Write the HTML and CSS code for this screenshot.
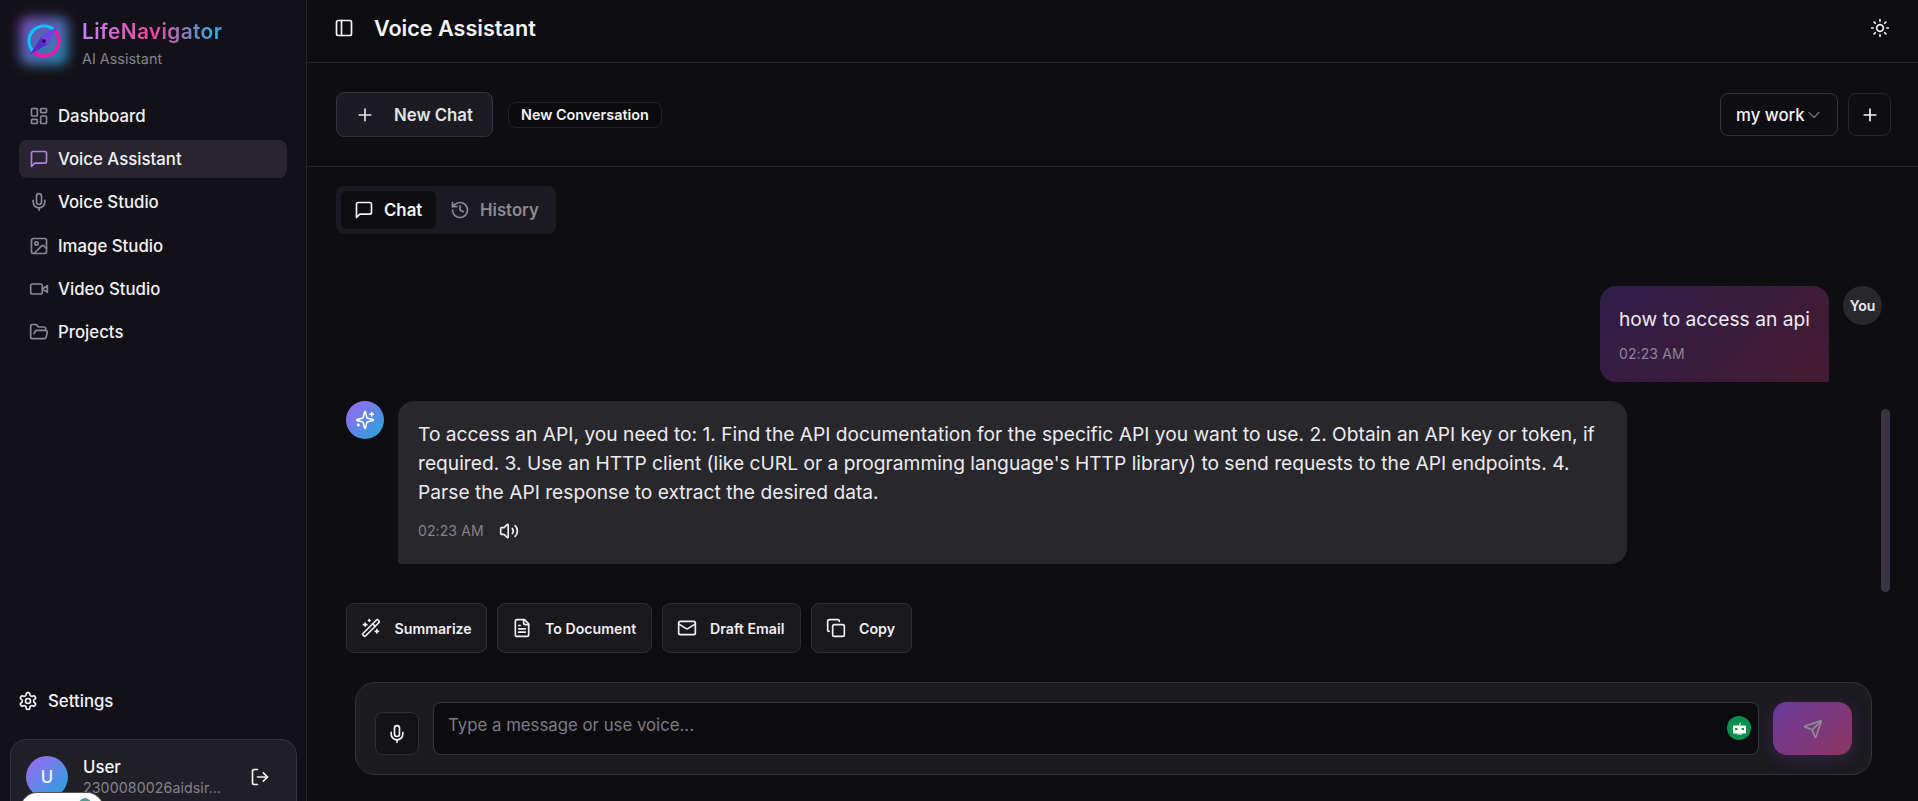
FILE: index.html
```html
<!DOCTYPE html>
<html lang="en">
<head>
<meta charset="utf-8">
<title>LifeNavigator - Voice Assistant</title>
<link rel="stylesheet" href="styles.css">
</head>
<body>
<div class="app">
  <aside class="sidebar">
    <div class="brand">
      <div class="logo">
        <svg class="logo-svg" width="36" height="36" viewBox="0 0 36 36" fill="none">
          <defs>
            <linearGradient id="ring" x1="0" y1="0" x2="1" y2="1"><stop offset=".5" stop-color="#00c8ff"/><stop offset=".5" stop-color="#ff10a8"/></linearGradient>
          </defs>
          <circle cx="18" cy="18" r="15" stroke="url(#ring)" stroke-width="3"/>
          <path d="M32 3 15 14.500 3.500 32 21 21.500Z" fill="#5a28d2"/>
          <path d="M32 3 15 14.500 21 21.500Z" fill="#7440ea"/>
          <circle cx="18" cy="18" r="1.800" fill="#120a30"/>
        </svg>
      </div>
      <div class="brand-text">
        <div class="brand-name">LifeNavigator</div>
        <div class="brand-sub">AI Assistant</div>
      </div>
    </div>
    <nav class="nav">
      <a class="nav-item"><svg class="ic" viewBox="0 0 24 24"><rect x="3" y="3" width="7" height="9" rx="1"/><rect x="14" y="3" width="7" height="5" rx="1"/><rect x="14" y="12" width="7" height="9" rx="1"/><rect x="3" y="16" width="7" height="5" rx="1"/></svg>Dashboard</a>
      <a class="nav-item active"><svg class="ic" viewBox="0 0 24 24"><path d="M21 15a2 2 0 0 1-2 2H7l-4 4V5a2 2 0 0 1 2-2h14a2 2 0 0 1 2 2z"/></svg>Voice Assistant</a>
      <a class="nav-item"><svg class="ic" viewBox="0 0 24 24"><path d="M12 2a3 3 0 0 0-3 3v7a3 3 0 0 0 6 0V5a3 3 0 0 0-3-3Z"/><path d="M19 10v2a7 7 0 0 1-14 0v-2"/><line x1="12" x2="12" y1="19" y2="22"/></svg>Voice Studio</a>
      <a class="nav-item"><svg class="ic" viewBox="0 0 24 24"><rect x="3" y="3" width="18" height="18" rx="2"/><circle cx="9" cy="9" r="2"/><path d="m21 15-3.100-3.100a2 2 0 0 0-2.800 0L6 21"/></svg>Image Studio</a>
      <a class="nav-item"><svg class="ic" viewBox="0 0 24 24"><path d="m22 8-6 4 6 4V8Z"/><rect x="2" y="6" width="14" height="12" rx="2"/></svg>Video Studio</a>
      <a class="nav-item"><svg class="ic" viewBox="0 0 24 24"><path d="m6 14 1.500-2.900A2 2 0 0 1 9.240 10H20a2 2 0 0 1 1.940 2.500l-1.540 6a2 2 0 0 1-1.950 1.500H4a2 2 0 0 1-2-2V5a2 2 0 0 1 2-2h3.900a2 2 0 0 1 1.690.9l.81 1.200a2 2 0 0 0 1.670.9H18a2 2 0 0 1 2 2v2"/></svg>Projects</a>
    </nav>
    <div class="settings"><svg class="ic" viewBox="0 0 24 24"><path d="M12.220 2h-.44a2 2 0 0 0-2 2v.18a2 2 0 0 1-1 1.730l-.43.25a2 2 0 0 1-2 0l-.15-.08a2 2 0 0 0-2.730.73l-.22.38a2 2 0 0 0 .73 2.730l.15.1a2 2 0 0 1 1 1.720v.51a2 2 0 0 1-1 1.740l-.15.09a2 2 0 0 0-.73 2.730l.22.38a2 2 0 0 0 2.730.73l.15-.08a2 2 0 0 1 2 0l.43.25a2 2 0 0 1 1 1.730V20a2 2 0 0 0 2 2h.44a2 2 0 0 0 2-2v-.18a2 2 0 0 1 1-1.730l.43-.25a2 2 0 0 1 2 0l.15.08a2 2 0 0 0 2.730-.73l.22-.39a2 2 0 0 0-.73-2.730l-.15-.08a2 2 0 0 1-1-1.740v-.5a2 2 0 0 1 1-1.740l.15-.09a2 2 0 0 0 .73-2.730l-.22-.38a2 2 0 0 0-2.730-.73l-.15.08a2 2 0 0 1-2 0l-.43-.25a2 2 0 0 1-1-1.730V4a2 2 0 0 0-2-2z"/><circle cx="12" cy="12" r="3"/></svg>Settings</div>
    <div class="user-card">
      <div class="user-avatar">U</div>
      <div class="user-info">
        <div class="user-name">User</div>
        <div class="user-mail">2300080026aidsir...</div>
      </div>
      <svg class="ic logout" viewBox="0 0 24 24"><path d="M9 21H5a2 2 0 0 1-2-2V5a2 2 0 0 1 2-2h4"/><polyline points="16 17 21 12 16 7"/><line x1="21" x2="9" y1="12" y2="12"/></svg>
    </div>
    <div class="float-pill"><span class="pill-dot"></span></div>
  </aside>
  <main class="main">
    <header class="topbar">
      <svg class="ic panel-ic" viewBox="0 0 24 24"><rect x="3" y="3" width="18" height="18" rx="2"/><path d="M9 3v18"/></svg>
      <h1 class="title">Voice Assistant</h1>
      <svg class="ic sun-ic" viewBox="0 0 24 24"><circle cx="12" cy="12" r="4"/><path d="M12 2v2M12 20v2M4.930 4.930l1.410 1.410M17.660 17.660l1.410 1.410M2 12h2M20 12h2M6.340 17.660l-1.410 1.410M19.070 4.930l-1.410 1.410"/></svg>
    </header>
    <section class="toolbar">
      <button class="new-chat"><svg class="ic" viewBox="0 0 24 24"><path d="M5 12h14M12 5v14"/></svg>New Chat</button>
      <span class="badge">New Conversation</span>
      <div class="toolbar-right">
        <button class="select">my work<svg class="ic chev" viewBox="0 0 24 24"><path d="m6 9 6 6 6-6"/></svg></button>
        <button class="add"><svg class="ic" viewBox="0 0 24 24"><path d="M5 12h14M12 5v14"/></svg></button>
      </div>
    </section>
    <section class="content">
      <div class="tabs">
        <button class="tab on"><svg class="ic" viewBox="0 0 24 24"><path d="M21 15a2 2 0 0 1-2 2H7l-4 4V5a2 2 0 0 1 2-2h14a2 2 0 0 1 2 2z"/></svg>Chat</button>
        <button class="tab"><svg class="ic" viewBox="0 0 24 24"><path d="M3 12a9 9 0 1 0 9-9 9.750 9.750 0 0 0-6.740 2.740L3 8"/><path d="M3 3v5h5"/><path d="M12 7v5l4 2"/></svg>History</button>
      </div>
      <div class="messages">
        <div class="row-user">
          <div class="bubble-user">
            <div class="msg">how to access an api</div>
            <div class="time user-time">02:23 AM</div>
          </div>
          <div class="you">You</div>
        </div>
        <div class="row-ai">
          <div class="ai-avatar"><svg class="ic spark" viewBox="0 0 24 24"><path d="M9.940 15.500A2 2 0 0 0 8.500 14.060l-6.140-1.580a.5.5 0 0 1 0-.96L8.500 9.940A2 2 0 0 0 9.940 8.500l1.580-6.140a.5.5 0 0 1 .96 0L14.060 8.500A2 2 0 0 0 15.500 9.940l6.140 1.580a.5.5 0 0 1 0 .96L15.500 14.060a2 2 0 0 0-1.440 1.440l-1.580 6.140a.5.5 0 0 1-.96 0z"/><path d="M20 3v4M22 5h-4M4 17v2M5 18H3"/></svg></div>
          <div class="bubble-ai">
            <div class="msg">To access an API, you need to: 1. Find the API documentation for the specific API you want to use. 2. Obtain an API key or token, if required. 3. Use an HTTP client (like cURL or a programming language's HTTP library) to send requests to the API endpoints. 4. Parse the API response to extract the desired data.</div>
            <div class="meta"><span class="time">02:23 AM</span><svg class="ic vol" viewBox="0 0 24 24"><path d="M11 4.700a.7.7 0 0 0-1.200-.5L6.400 7.600A1.400 1.400 0 0 1 5.400 8H3a1 1 0 0 0-1 1v6a1 1 0 0 0 1 1h2.400a1.400 1.400 0 0 1 1 .4l3.400 3.400a.7.7 0 0 0 1.200-.5z"/><path d="M16 9a5 5 0 0 1 0 6"/><path d="M19.400 18.400a9 9 0 0 0 0-12.800"/></svg></div>
          </div>
        </div>
        <div class="scroll-thumb"></div>
      </div>
      <div class="actions">
        <button class="action act-sum"><svg class="ic" viewBox="0 0 24 24"><path d="m21.640 3.640-1.280-1.280a1.210 1.210 0 0 0-1.720 0L2.360 18.640a1.210 1.210 0 0 0 0 1.720l1.280 1.280a1.200 1.200 0 0 0 1.720 0L21.640 5.360a1.200 1.200 0 0 0 0-1.720"/><path d="m14 7 3 3M5 6v4M19 14v4M10 2v2M7 8H3M21 16h-4M11 3H9"/></svg>Summarize</button>
        <button class="action act-doc"><svg class="ic" viewBox="0 0 24 24"><path d="M15 2H6a2 2 0 0 0-2 2v16a2 2 0 0 0 2 2h12a2 2 0 0 0 2-2V7Z"/><path d="M14 2v4a2 2 0 0 0 2 2h4M16 13H8M16 17H8M10 9H8"/></svg>To Document</button>
        <button class="action act-mail"><svg class="ic" viewBox="0 0 24 24"><rect x="2" y="4" width="20" height="16" rx="2"/><path d="m22 7-8.970 5.700a1.940 1.940 0 0 1-2.060 0L2 7"/></svg>Draft Email</button>
        <button class="action act-copy"><svg class="ic" viewBox="0 0 24 24"><rect x="8" y="8" width="14" height="14" rx="2"/><path d="M4 16c-1.100 0-2-.9-2-2V4c0-1.100.9-2 2-2h10c1.100 0 2 .9 2 2"/></svg>Copy</button>
      </div>
      <div class="composer">
        <button class="mic"><svg class="ic" viewBox="0 0 24 24"><path d="M12 2a3 3 0 0 0-3 3v7a3 3 0 0 0 6 0V5a3 3 0 0 0-3-3Z"/><path d="M19 10v2a7 7 0 0 1-14 0v-2"/><line x1="12" x2="12" y1="19" y2="22"/></svg></button>
        <div class="input">
          <span class="placeholder">Type a message or use voice...</span>
          <span class="bot">
            <svg width="15" height="13" viewBox="0 0 15 13"><path d="M7 4 8.500 .8" stroke="#fff" stroke-width="1" fill="none"/><rect x="1" y="3.500" width="13" height="8" rx="1" fill="#fff"/><rect x="3" y="6" width="2.400" height="2" fill="#0b8f4d"/><rect x="9.600" y="6" width="2.400" height="2" fill="#0b8f4d"/><rect x="5" y="11.500" width="5" height="1" fill="#fff"/></svg>
          </span>
        </div>
        <button class="send"><svg class="ic" viewBox="0 0 24 24"><path d="M14.536 21.686a.5.5 0 0 0 .937-.024l6.500-19a.496.496 0 0 0-.635-.635l-19 6.500a.5.5 0 0 0-.024.937l7.930 3.180a2 2 0 0 1 1.112 1.110z"/><path d="m21.854 2.147-10.940 10.939"/></svg></button>
      </div>
    </section>
  </main>
</div>
</body>
</html>
```
FILE: styles.css
```css
* { box-sizing: border-box; }
html, body { margin: 0; height: 100%; overflow: hidden; }
body { background: #0e0d12; color: #f5f5f6; font-family: Inter, "Liberation Sans", sans-serif; font-size: 16px; }
button { font-family: inherit; color: inherit; cursor: pointer; }
.ic { width: 20px; height: 20px; fill: none; stroke: currentColor; stroke-width: 2; stroke-linecap: round; stroke-linejoin: round; flex: none; }

.app { display: flex; height: 801px; overflow: hidden; }
.sidebar { width: 307px; flex: none; background: #131118; border-right: 1px solid #26252b; display: flex; flex-direction: column; position: relative; overflow: hidden; }
.brand { display: flex; gap: 20px; padding: 15px 0 0 26px; height: 80px; align-items: flex-start; }
.logo { width: 36px; height: 36px; margin-top: 8px; flex: none; position: relative; }
.logo::before { content: ""; position: absolute; inset: -6px; border-radius: 8px; background: linear-gradient(135deg, #8048bc, #1d8cac); filter: blur(6px); }
.logo-svg { display: block; position: relative; }
.brand-name { font-size: 20.8px; font-weight: 600; line-height: 24px; margin-top: 5px; letter-spacing: .4px; background: linear-gradient(90deg, #c084fc 0%, #ec4899 50%, #22b8e8 100%); -webkit-background-clip: text; background-clip: text; color: transparent; width: max-content; }
.brand-sub { font-size: 14.4px; line-height: 20px; color: #85838c; margin-top: 5px; }

.nav { display: flex; flex-direction: column; gap: 5.2px; padding: 17px 19px 0; }
.nav-item { display: flex; align-items: center; height: 38px; padding: 0 10px; gap: 9px; border-radius: 8px; font-size: 16.8px; font-weight: 500; color: #f2f2f4; }
.nav-item .ic { color: #8a8890; }
.nav-item.active { background: #282430; }
.nav-item.active .ic { color: #b57ee8; }

.settings { display: flex; align-items: center; gap: 10px; margin-top: auto; padding-left: 18px; font-size: 16.8px; font-weight: 500; height: 24px; color: #f2f2f4; }
.user-card { margin: 26px 9px -40px 10px; height: 102px; flex: none; background: #211f26; border: 1px solid #36343b; border-radius: 16px; display: flex; align-items: flex-start; padding: 16px 0 0 15px; position: relative; }
.user-avatar { width: 42px; height: 42px; border-radius: 50%; background: linear-gradient(135deg, #a463f2, #1fa8dc); display: flex; align-items: center; justify-content: center; font-size: 16.8px; font-weight: 500; color: #f4f4f6; flex: none; }
.user-info { margin-left: 15px; width: 146px; }
.user-name { font-size: 16.8px; font-weight: 500; line-height: 21px; margin-top: 1px; }
.user-mail { font-size: 14.2px; line-height: 20px; color: #85838c; white-space: nowrap; letter-spacing: .1px; }
.logout { margin: 11px 0 0 21px; }
.float-pill { position: absolute; left: 21px; top: 793px; width: 82px; height: 44px; background: #fff; border-radius: 16px; box-shadow: 0 0 0 1px #55545a; }
.pill-dot { position: absolute; left: 58px; top: 5px; width: 12px; height: 12px; border-radius: 50%; background: #4f9d95; }

.main { flex: 1; min-width: 0; display: flex; flex-direction: column; }
.topbar { height: 63px; flex: none; display: flex; align-items: center; padding: 0 28px 6px 27px; border-bottom: 1px solid #26252b; }
.panel-ic { margin-right: 20px; }
.title { font-size: 21.6px; font-weight: 600; margin: 0; color: #f4f4f5; }
.sun-ic { margin-left: auto; }

.toolbar { height: 104px; flex: none; display: flex; align-items: center; padding: 0 27px 0 29px; border-bottom: 1px solid #26252b; }
.new-chat { height: 45px; width: 157px; background: #1c1b21; border: 1px solid #34333a; border-radius: 8px; display: flex; align-items: center; padding: 0 0 0 18px; gap: 19px; font-size: 16.8px; font-weight: 600; color: #e4e4e7; }
.badge { margin-left: 15px; height: 26px; padding: 0 12px; display: inline-flex; align-items: center; border: 1px solid #202026; border-radius: 8px; font-size: 14.4px; font-weight: 600; color: #f2f2f4; background: #0b0a0e; }
.toolbar-right { margin-left: auto; display: flex; gap: 10px; }
.select { height: 43px; width: 118px; background: #0e0d12; border: 1px solid #34333a; border-radius: 8px; display: flex; align-items: center; padding: 0 0 0 15px; font-size: 16.8px; font-weight: 500; }
.chev { margin-left: -1px; color: #6f6d75; stroke-width: 1.6; }
.add { height: 43px; width: 43px; background: #0e0d12; border: 1px solid #26252b; border-radius: 8px; display: flex; align-items: center; justify-content: center; padding: 0; }

.content { flex: 1; min-height: 0; display: flex; flex-direction: column; padding: 19px 29px 0; }
.tabs { display: flex; align-self: flex-start; width: 220px; height: 48px; padding: 5px; background: #1b1a20; border-radius: 8px; }
.tab { height: 38px; width: 95px; background: none; border: 0; border-radius: 6px; display: flex; align-items: center; gap: 10px; padding: 0 0 0 13px; font-size: 16.8px; font-weight: 600; color: #8b8993; }
.tab + .tab { width: 115px; padding-left: 14px; }
.tab.on { background: #0e0d12; color: #f4f4f5; }

.messages { height: 369px; flex: none; position: relative; padding: 52px 0 0; }
.row-user { display: flex; justify-content: flex-end; gap: 14px; padding-right: 7px; }
.bubble-user { width: 229px; height: 96px; padding: 19px 19px; background: linear-gradient(135deg, #2f1d4a, #451b31); border-radius: 16px 16px 2px 16px; }
.msg { font-size: 19.2px; line-height: 29px; color: #ecebef; }
.time { font-size: 14px; line-height: 20px; color: #84828a; letter-spacing: .1px; }
.user-time { margin-top: 10px; color: #8d8594; }
.you { width: 39px; height: 39px; border-radius: 50%; background: #29282d; display: flex; align-items: center; justify-content: center; font-size: 14px; font-weight: 600; color: #ececee; }
.row-ai { display: flex; gap: 14px; margin-top: 19px; padding-left: 10px; }
.ai-avatar { width: 38px; height: 38px; border-radius: 50%; background: linear-gradient(135deg, #a463f2, #1fa8dc); display: flex; align-items: center; justify-content: center; flex: none; }
.spark { color: #fff; }
.bubble-ai { width: 1229px; height: 163px; padding: 19px 20px; background: #28272c; border-radius: 16px 16px 16px 3px; }
.meta { display: flex; align-items: center; gap: 15px; margin-top: 14px; }
.vol { color: #f0f0f2; }
.scroll-thumb { position: absolute; left: 1545px; top: 175px; width: 9px; height: 183px; background: #393540; border-radius: 5px; }

.actions { display: flex; gap: 9.5px; padding-left: 10px; }
.action { height: 50px; background: #1a191e; border: 1px solid #2f2e34; border-radius: 8px; display: flex; align-items: center; gap: 13.5px; padding: 0 0 0 14px; font-size: 14.2px; font-weight: 600; color: #efeff1; }
.act-sum { width: 141px; }
.act-doc { width: 155.5px; }
.act-mail { width: 139.5px; }
.act-copy { width: 101px; }

.composer { margin: 29px 17px 0 19px; height: 93px; background: #1c1b20; border: 1px solid #33323a; border-radius: 20px; display: flex; align-items: flex-end; padding: 0 19px 19px 19px; flex: none; }
.mic { width: 44px; height: 43px; background: #131217; border: 1px solid #2e2d33; border-radius: 8px; display: flex; align-items: center; justify-content: center; padding: 0; flex: none; }
.input { flex: 1; height: 53px; margin-left: 14px; background: #0c0b0f; border: 1px solid #3a3542; border-radius: 8px; position: relative; padding: 11px 14px; }
.placeholder { font-size: 16.8px; line-height: 22px; color: #7e7c85; }
.bot { position: absolute; right: 7px; top: 13px; width: 24px; height: 24px; border-radius: 50%; background: #0b8f4d; display: flex; align-items: center; justify-content: center; }
.send { width: 79px; height: 53px; margin-left: 14px; flex: none; border: 0; border-radius: 14px; background: linear-gradient(135deg, #6a3a9e, #8d355f); box-shadow: 0 4px 16px rgba(126,58,170,.25); display: flex; align-items: center; justify-content: center; padding: 0; color: #8f8a96; }
```
